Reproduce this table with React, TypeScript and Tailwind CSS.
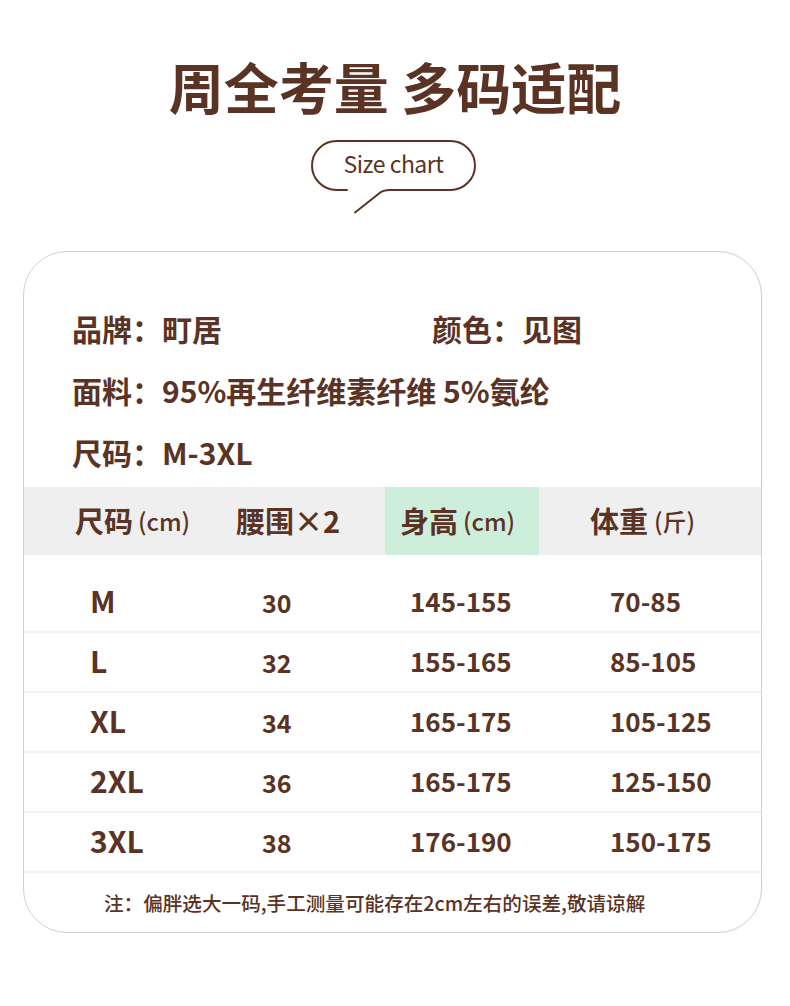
import React from "react";

const brown = "text-[#5a3324]";

const infoRows = [
  [
    { label: "品牌：", value: "町居" },
    { label: "颜色：", value: "见图" },
  ],
  [{ label: "面料：", value: "95%再生纤维素纤维 5%氨纶" }],
  [{ label: "尺码：", value: "M-3XL" }],
];

const sizes = [
  { size: "M", waist: "30", height: "145-155", weight: "70-85" },
  { size: "L", waist: "32", height: "155-165", weight: "85-105" },
  { size: "XL", waist: "34", height: "165-175", weight: "105-125" },
  { size: "2XL", waist: "36", height: "165-175", weight: "125-150" },
  { size: "3XL", waist: "38", height: "176-190", weight: "150-175" },
];

const SpeechBubble = () => (
  <div className="relative mx-auto mt-[22px] flex h-[85px] w-[190px] justify-center">
    <svg
      className="absolute inset-0"
      width="190"
      height="85"
      viewBox="0 0 190 85"
      fill="none"
    >
      <path
        d="M47 55 H36.5 A24.5 24.5 0 0 1 12 30.5 A24.5 24.5 0 0 1 36.5 6 H150.5 A24.5 24.5 0 0 1 175 30.5 A24.5 24.5 0 0 1 150.5 55 H90 Q83 55 79 58.5 L55 77.5"
        stroke="#5a3324"
        strokeWidth="2"
        strokeLinecap="round"
        strokeLinejoin="round"
      />
    </svg>
    <span className={`relative ml-[-3px] mt-[14px] text-[23px] leading-[28px] tracking-[-0.5px] ${brown}`}>
      Size chart
    </span>
  </div>
);

export default function App() {
  return (
    <div
      className={`w-[790px] min-h-[1006px] bg-white pb-[72px] font-['Noto_Sans_CJK_SC',sans-serif] ${brown}`}
    >
      <h1 className="pt-[58px] text-center text-[55px] font-bold leading-[55px]">
        周全考量 多码适配
      </h1>

      <SpeechBubble />

      <div className="ml-[23px] mt-[31px] w-[739px] overflow-hidden rounded-[44px] border border-[#cfcfcf]">
        <div className="pb-[4px] pl-[48px] pt-[45px]">
          {infoRows.map((row, i) => (
            <div key={i} className="flex h-[62px] items-center text-[30px] font-bold">
              {row.map((cell, j) => (
                <div key={j} className={j === 1 ? "ml-auto mr-[179px]" : ""}>
                  <span>{cell.label}</span>
                  <span>{cell.value}</span>
                </div>
              ))}
            </div>
          ))}
        </div>

        <div className="grid h-[68px] grid-cols-[212px_149px_154px_1fr] bg-[#efefef] font-bold">
          <div className="flex items-center pl-[51px] text-[29px]">
            尺码<span className="ml-[5px] text-[24px] font-medium">(cm)</span>
          </div>
          <div className="flex items-center text-[29px]">腰围×2</div>
          <div className="flex items-center bg-[#cdeedb] pl-[15px] text-[29px]">
            身高<span className="ml-[5px] text-[24px] font-medium">(cm)</span>
          </div>
          <div className="flex items-center pl-[51px] text-[29px]">
            体重<span className="ml-[6px] text-[24px] font-medium">(斤)</span>
          </div>
        </div>

        <div className="pt-[18px]">
          {sizes.map((s) => (
            <div
              key={s.size}
              className="grid h-[60px] grid-cols-[212px_149px_154px_1fr] items-center border-b-2 border-[#f4f4f4] font-bold"
            >
              <div className="pb-[4px] pl-[66px] text-[30px]">{s.size}</div>
              <div className="pl-[26px] pt-[2px] text-[25px]">{s.waist}</div>
              <div className="pb-[4px] pl-[25px] text-[26px]">{s.height}</div>
              <div className="pb-[4px] pl-[71px] text-[26px]">{s.weight}</div>
            </div>
          ))}
        </div>

        <div className="flex h-[59px] items-center pl-[80px] text-[19.6px] font-medium">
          注：偏胖选大一码,手工测量可能存在2cm左右的误差,敬请谅解
        </div>
      </div>
    </div>
  );
}
